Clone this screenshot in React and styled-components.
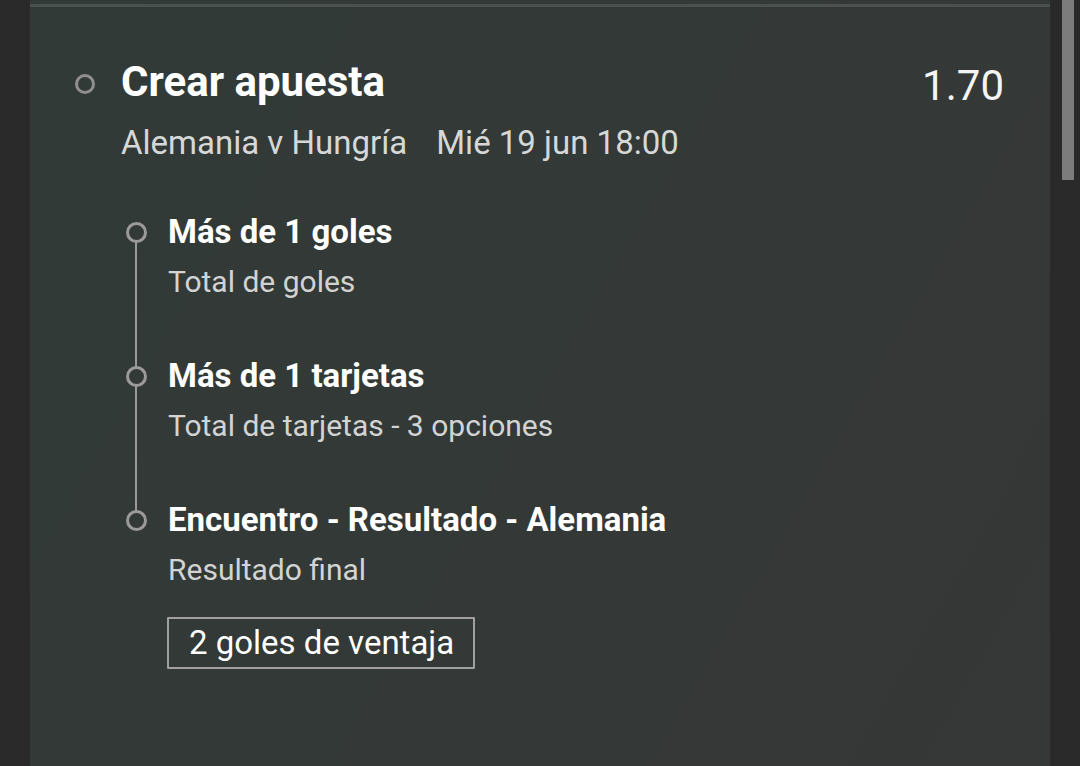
import React from "react";
import styled, { createGlobalStyle } from "styled-components";

const Global = createGlobalStyle`
  html, body {
    margin: 0;
    padding: 0;
    background: #2a2a2a;
  }
  body {
    font-family: Roboto, "Noto Sans", "Liberation Sans", sans-serif;
    -webkit-font-smoothing: antialiased;
  }
`;

const Page = styled.div`
  display: flex;
  height: 766px;
  padding-left: 30px;
  background: #2a2a2a;
  overflow: hidden;
`;

const Panel = styled.section`
  width: 1020px;
  flex: none;
  padding-top: 4px;
  background: linear-gradient(120deg, #313a37 0%, #333936 45%, #363737 100%);
  display: flex;
  flex-direction: column;
`;

const Divider = styled.div`
  height: 3px;
  background: #4a514f;
`;

const Rail = styled.div`
  flex: 1;
  padding-left: 12px;
`;

const Thumb = styled.div`
  width: 12px;
  height: 180px;
  background: #7c7c7c;
`;

const Body = styled.div`
  padding: 52px 46px 0 44px;
`;

const Header = styled.div`
  display: flex;
  align-items: flex-start;
`;

const Bullet = styled.span`
  flex: none;
  box-sizing: border-box;
  width: ${(p) => p.$size}px;
  height: ${(p) => p.$size}px;
  border-radius: 50%;
  border: 3px solid ${(p) => p.$color};
  background: transparent;
`;

const HeaderBullet = styled(Bullet)`
  margin-top: 15px;
  margin-left: 1px;
  margin-right: 26px;
`;

const HeaderText = styled.div`
  flex: 1;
  display: flex;
  flex-direction: column;
  gap: 20px;
`;

const Title = styled.h1`
  margin: 0;
  font-size: 42px;
  line-height: 46px;
  font-weight: 700;
  color: #ffffff;
`;

const Meta = styled.div`
  display: flex;
  gap: 29px;
  font-size: 33px;
  line-height: 36px;
  color: #d6d8d7;
`;

const Odds = styled.div`
  font-size: 42px;
  line-height: 46px;
  margin-top: 4px;
  color: #f4f4f4;
`;

const Legs = styled.ol`
  position: relative;
  list-style: none;
  margin: 54px 0 0 52px;
  padding: 0;
  display: flex;
  flex-direction: column;
  gap: 60px;

  /* connector running through the leg markers */
  &::before {
    content: "";
    position: absolute;
    left: 9px;
    top: 24px;
    height: 288px;
    width: 2px;
    background: #9a9a9a;
  }
`;

const Leg = styled.li`
  display: flex;
  align-items: flex-start;
`;

const LegMarker = styled(Bullet)`
  position: relative;
  z-index: 1;
  margin-top: 7px;
  margin-right: 21px;
  background: #323936;
`;

const LegText = styled.div`
  display: flex;
  flex-direction: column;
  gap: 16px;
`;

const LegTitle = styled.div`
  font-size: 33px;
  line-height: 34px;
  font-weight: 700;
  color: #ffffff;
`;

const LegSub = styled.div`
  font-size: 30px;
  line-height: 34px;
  color: #d2d4d3;
`;

const Chip = styled.div`
  align-self: flex-start;
  margin: 14px 0 0 -1px;
  box-sizing: border-box;
  height: 52px;
  padding: 0 19px 0 20px;
  border: 2px solid #a0a0a0;
  border-radius: 1px;
  font-size: 33px;
  line-height: 48px;
  color: #ffffff;
`;

const legs = [
  { title: "Más de 1 goles", sub: "Total de goles" },
  { title: "Más de 1 tarjetas", sub: "Total de tarjetas - 3 opciones" },
  {
    title: "Encuentro - Resultado - Alemania",
    sub: "Resultado final",
    chip: "2 goles de ventaja",
  },
];

export default function App() {
  return (
    <>
      <Global />
      <Page>
        <Panel>
          <Divider />
          <Body>
            <Header>
              <HeaderBullet $size={20} $color="#8f8f8f" />
              <HeaderText>
                <Title>Crear apuesta</Title>
                <Meta>
                  <span>Alemania v Hungría</span>
                  <span>Mié 19 jun 18:00</span>
                </Meta>
              </HeaderText>
              <Odds>1.70</Odds>
            </Header>
            <Legs>
              {legs.map((leg) => (
                <Leg key={leg.title}>
                  <LegMarker $size={21} $color="#9a9a9a" />
                  <LegText>
                    <LegTitle>{leg.title}</LegTitle>
                    <LegSub>{leg.sub}</LegSub>
                    {leg.chip && <Chip>{leg.chip}</Chip>}
                  </LegText>
                </Leg>
              ))}
            </Legs>
          </Body>
        </Panel>
        <Rail>
          <Thumb />
        </Rail>
      </Page>
    </>
  );
}
